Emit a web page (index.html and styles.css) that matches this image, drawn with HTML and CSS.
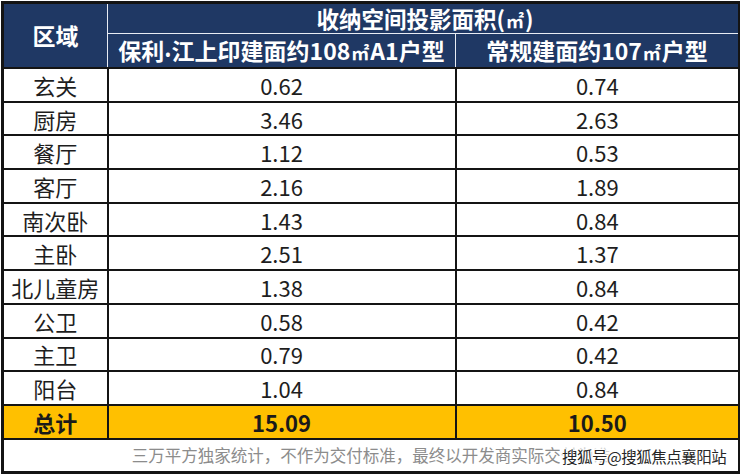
FILE: index.html
```html
<!DOCTYPE html>
<html lang="zh-CN">
<head>
<meta charset="utf-8">
<title>收纳空间投影面积</title>
<link rel="stylesheet" href="styles.css">
</head>
<body>
<table class="storage">
  <colgroup>
    <col class="c-area">
    <col class="c-a">
    <col class="c-b">
  </colgroup>
  <thead>
    <tr class="h1">
      <th class="head area" rowspan="2">区域</th>
      <th class="head title" colspan="2">收纳空间投影面积(<span class="unit">㎡</span>)</th>
    </tr>
    <tr class="h2">
      <th class="head sub">保利<span class="dot">•</span>江上印建面约108<span class="unit">㎡</span>A1户型</th>
      <th class="head sub">常规建面约107<span class="unit">㎡</span>户型</th>
    </tr>
  </thead>
  <tbody>
    <tr><td>玄关</td><td>0.62</td><td>0.74</td></tr>
    <tr><td>厨房</td><td>3.46</td><td>2.63</td></tr>
    <tr><td>餐厅</td><td>1.12</td><td>0.53</td></tr>
    <tr><td>客厅</td><td>2.16</td><td>1.89</td></tr>
    <tr><td>南次卧</td><td>1.43</td><td>0.84</td></tr>
    <tr><td>主卧</td><td>2.51</td><td>1.37</td></tr>
    <tr><td>北儿童房</td><td>1.38</td><td>0.84</td></tr>
    <tr><td>公卫</td><td>0.58</td><td>0.42</td></tr>
    <tr><td>主卫</td><td>0.79</td><td>0.42</td></tr>
    <tr><td>阳台</td><td>1.04</td><td>0.84</td></tr>
    <tr class="total"><td>总计</td><td>15.09</td><td>10.50</td></tr>
    <tr class="foot">
      <td colspan="3">
        <div class="note">三万平方独家统计，不作为交付标准，最终以开发商实际交付为准<span class="watermark">搜狐号@搜狐焦点襄阳站</span></div>
      </td>
    </tr>
  </tbody>
</table>
</body>
</html>
```
FILE: styles.css
```css
html, body {
  margin: 0;
  padding: 0;
  background: #ffffff;
}

.storage {
  border-collapse: collapse;
  table-layout: fixed;
  width: 737px;
  margin: 1px 0 0 1px;
  border: 3px solid #141414;
  font-family: "Noto Sans CJK SC", "Noto Sans", sans-serif;
  color: #1e1e1e;
}

.c-area { width: 105px; }
.c-a { width: 348px; }
.c-b { width: 284px; }

.storage td,
.storage th {
  border: 2px solid #141414;
  text-align: center;
  padding: 0;
  font-size: 22px;
  line-height: 30px;
  height: 31.7px;
  white-space: nowrap;
}

.storage th.head {
  background: #1f3864;
  color: #ffffff;
  font-weight: 700;
  border-color: #e8ecf4;
  border-width: 1.5px;
}

.storage .h1 th { height: 29px; line-height: 29px; }
.storage .h2 th { height: 33px; line-height: 33px; }

.storage th.area { font-size: 23px; }
.storage th.title { font-size: 22.5px; padding-left: 4px; }
.storage th.sub { font-size: 23px; }

.unit {
  font-size: 18px;
  font-weight: 700;
  line-height: 0;
  margin: 0 1px;
}

.dot {
  font-family: "Noto Sans", sans-serif;
  font-size: 14px;
  line-height: 0;
  margin: 0 1px;
}

.total td {
  background: #ffc000;
  font-weight: 700;
  color: #1a1a1a;
}

.storage .foot td {
  height: 31px;
}

.note {
  position: relative;
  font-size: 16.5px;
  color: #8c8c8c;
  line-height: 30px;
}

.watermark {
  position: absolute;
  left: 556px;
  top: 1px;
  padding-left: 2px;
  font-size: 15.5px;
  color: #262626;
  letter-spacing: -0.5px;
  background: rgba(255, 255, 255, 0.6);
  text-shadow: 1px 0 0 #fff, -1px 0 0 #fff, 0 1px 0 #fff, 0 -1px 0 #fff;
}
```
